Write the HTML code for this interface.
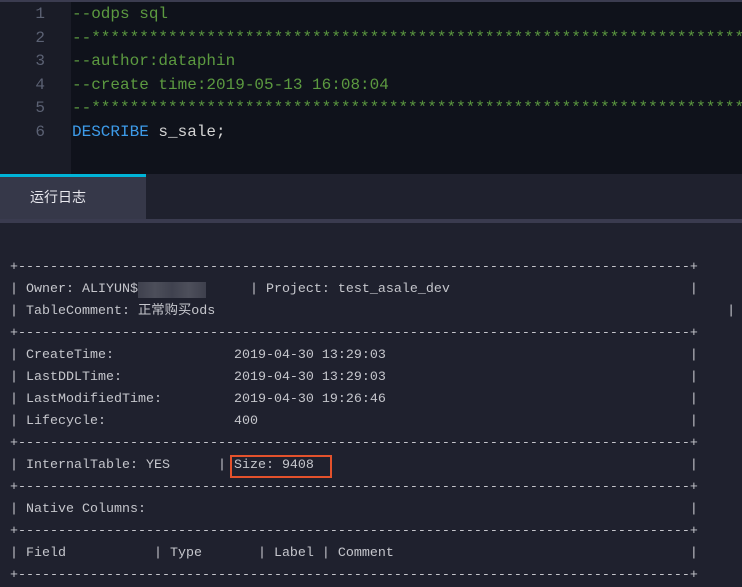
<!DOCTYPE html>
<html><head><meta charset="utf-8"><style>
*{margin:0;padding:0;box-sizing:border-box}
body{width:742px;height:581px;overflow:hidden;background:#1f212e;position:relative;font-family:"Liberation Mono","Noto Sans CJK SC",monospace}
.top{position:absolute;left:0;top:0;width:742px;height:2px;background:#3b3c50}
.ed{position:absolute;left:0;top:2px;width:742px;height:172px;background:#0f121b}
.gut{position:absolute;left:0;top:2px;width:71px;height:172px;background:#1a1c27}
.ln{position:absolute;left:0;top:3px;width:45px;text-align:right;color:#5b6173;font-size:16px;line-height:23.5px}
.code{position:absolute;left:72px;top:3px;width:670px;overflow:hidden;font-size:16px;line-height:23.5px;white-space:pre;color:#d4d4d4}
.c{color:#5c9a40}.k{color:#3d9be9}
.tabbar{position:absolute;left:0;top:174px;width:742px;height:45px;background:#1f212e}
.tab{position:absolute;left:0;top:174px;width:146px;height:45px;background:#363849;border-top:3px solid #00b4d8;color:#e8e8ee;font-family:"Liberation Sans","Noto Sans CJK SC",sans-serif;font-size:14px;padding:10px 0 0 30px}
.sep{position:absolute;left:0;top:219px;width:742px;height:4px;background:#3a3b4f}
pre{position:absolute;left:10px;top:257px;font-family:"Liberation Mono","Noto Sans CJK SC",monospace;font-size:13.33px;line-height:22px;color:#c5c6cc;white-space:pre}
.blur{position:absolute;left:138px;top:282px;width:68px;height:16px;background:linear-gradient(90deg,#3f414e,#4c4e5a,#40424f,#4d4f5b,#3e404d)}
.box{position:absolute;left:230px;top:455px;width:102px;height:23px;border:2px solid #e4522c}
</style></head><body>
<div class="top"></div><div class="ed"></div><div class="gut"></div>
<div class="ln">1<br>2<br>3<br>4<br>5<br>6</div>
<div class="code"><span class="c">--odps sql</span>
<span class="c">--************************************************************************</span>
<span class="c">--author:dataphin</span>
<span class="c">--create time:2019-05-13 16:08:04</span>
<span class="c">--************************************************************************</span>
<span class="k">DESCRIBE</span> s_sale;</div>
<div class="tabbar"></div>
<div class="tab">运行日志</div>
<div class="sep"></div>
<pre>+------------------------------------------------------------------------------------+
| Owner: ALIYUN$              | Project: test_asale_dev                              |
| TableComment: 正常购买ods                                                                |
+------------------------------------------------------------------------------------+
| CreateTime:               2019-04-30 13:29:03                                      |
| LastDDLTime:              2019-04-30 13:29:03                                      |
| LastModifiedTime:         2019-04-30 19:26:46                                      |
| Lifecycle:                400                                                      |
+------------------------------------------------------------------------------------+
| InternalTable: YES      | Size: 9408                                               |
+------------------------------------------------------------------------------------+
| Native Columns:                                                                    |
+------------------------------------------------------------------------------------+
| Field           | Type       | Label | Comment                                     |
+------------------------------------------------------------------------------------+</pre>
<div class="blur"></div>
<div class="box"></div>
</body></html>
